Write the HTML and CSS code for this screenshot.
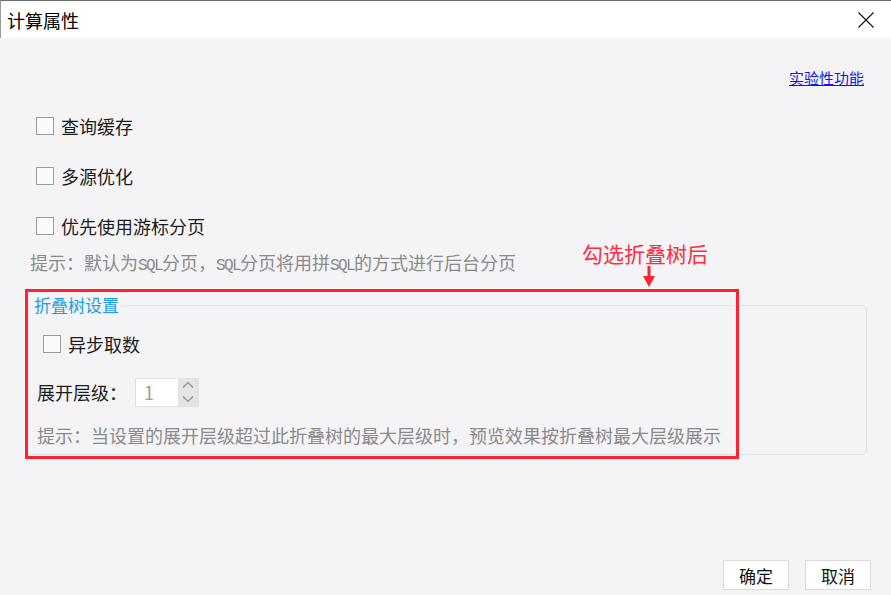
FILE: index.html
```html
<!doctype html>
<html lang="zh-CN">
    <head>
        <meta charset="UTF-8" />
        <meta name="viewport" content="width=device-width, initial-scale=1.0" />
        <title>计算属性</title>
        <link rel="stylesheet" href="styles.css">
    </head>
    <body>
        <div class="window">
            <div class="titlebar">
                <span class="title">计算属性</span>
                <svg class="close" width="16" height="16" viewBox="0 0 16 16">
                    <path d="M0.5 0.5 L15.5 15.5 M15.5 0.5 L0.5 15.5" stroke="#111" stroke-width="1.1" fill="none" />
                </svg>
            </div>
            <div class="content">
                <div class="topLink"><a href="#">实验性功能</a></div>
                <div class="options">
                    <label class="checkRow"><span class="box"></span>查询缓存</label>
                    <label class="checkRow"><span class="box"></span>多源优化</label>
                    <label class="checkRow"><span class="box"></span>优先使用游标分页</label>
                </div>
                <p class="hint">提示：默认为<span class="mono">SQL</span>分页，<span class="mono">SQL</span>分页将用拼<span class="mono">SQL</span>的方式进行后台分页</p>
                <div class="group">
                    <div class="groupTitle">折叠树设置</div>
                    <label class="checkRow inner"><span class="box"></span>异步取数</label>
                    <div class="levelRow">
                        <span>展开层级：</span>
                        <div class="spinner">
                            <span class="spinValue">1</span>
                            <div class="spinButtons">
                                <svg width="12" height="8" viewBox="0 0 12 8"><path d="M1 6.5 L6 1.5 L11 6.5" stroke="#8e8e8e" stroke-width="1.2" fill="none" /></svg>
                                <svg width="12" height="8" viewBox="0 0 12 8"><path d="M1 1.5 L6 6.5 L11 1.5" stroke="#8e8e8e" stroke-width="1.2" fill="none" /></svg>
                            </div>
                        </div>
                    </div>
                    <p class="hint inner">提示：当设置的展开层级超过此折叠树的最大层级时，预览效果按折叠树最大层级展示</p>
                </div>
            </div>
            <div class="footer">
                <button>确定</button>
                <button>取消</button>
            </div>

            <!-- annotation drawn over the dialog -->
            <div class="note">勾选折叠树后</div>
            <svg class="noteArrow" width="12" height="21" viewBox="0 0 12 21">
                <rect x="4.5" y="0" width="3" height="11" fill="#ff2433" />
                <path d="M0 10 L12 10 L6 21 Z" fill="#ff2433" />
            </svg>
            <div class="noteBox"></div>
        </div>
    </body>
</html>
```

FILE: styles.css
```css
body {
    margin: 0;
    font-family: "Noto Sans CJK SC", "Noto Sans", sans-serif;
    color: #1c1c1c;
    background: #f4f4f6;
}
.window {
    position: relative;
    display: flex;
    flex-direction: column;
    height: 595px;
    overflow: hidden;
}
.titlebar {
    display: flex;
    align-items: center;
    justify-content: space-between;
    box-sizing: border-box;
    height: 38px;
    padding: 0 17px 0 7px;
    background: #fff;
    border-top: 1px solid #6e6e6e;
    border-left: 1px solid #9a9a9a;
}
.title {
    font-size: 18px;
    line-height: 22px;
    color: #000;
    margin-left: -1px;
}
.close {
    margin-top: 1px;
}
.content {
    flex: 1;
}
.topLink {
    text-align: right;
    height: 20px;
    padding: 30px 27px 0 0;
    font-size: 15px;
    line-height: 20px;
}
.topLink a {
    color: #1515f0;
    text-decoration: underline;
}
.options {
    margin-top: 13px;
    padding-left: 36px;
}
.checkRow {
    display: flex;
    align-items: center;
    height: 50px;
    font-size: 18px;
}
.box {
    width: 16px;
    height: 16px;
    border: 1px solid #9c9c9c;
    background: #fafafa;
    margin-right: 7px;
}
.hint {
    margin: 0;
    padding-left: 30px;
    height: 22px;
    font-size: 18px;
    line-height: 22px;
    color: #8a8a8a;
}
.mono {
    font-family: "Liberation Mono", monospace;
    font-size: 16px;
    letter-spacing: -1.6px;
    line-height: 1;
}
.group {
    margin: 32px 24px 0 27px;
    padding: 0 0 8px 0;
    border: 1px solid #e3e3e7;
    border-radius: 6px;
}
.groupTitle {
    width: max-content;
    margin: -12px 0 0 3px;
    padding: 0 3px;
    background: #f4f4f6;
    color: #1a9ee2;
    font-size: 17px;
    line-height: 22px;
}
.checkRow.inner {
    height: 40px;
    margin-top: 8px;
    padding-left: 15px;
}
.levelRow {
    display: flex;
    align-items: center;
    height: 56px;
    padding-left: 9px;
    font-size: 18px;
}
.spinner {
    display: flex;
    height: 29px;
    margin-left: 8px;
    border: 1px solid #e0e0e0;
    box-sizing: border-box;
}
.spinValue {
    width: 34px;
    padding-left: 8px;
    background: #fff;
    color: #a59a98;
    line-height: 27px;
}
.spinButtons {
    display: flex;
    flex-direction: column;
    justify-content: center;
    gap: 6px;
    width: 20px;
    align-items: center;
    background: #e4e4e6;
}
.spinButtons svg {
    display: block;
}
.hint.inner {
    padding: 4px 0 0 9px;
}
.footer {
    display: flex;
    justify-content: flex-end;
    gap: 16px;
    padding: 0 20px 5px 0;
}
.footer button {
    width: 66px;
    height: 30px;
    font-family: "Noto Sans CJK SC", sans-serif;
    font-size: 17px;
    color: #111;
    background: #fff;
    border: 1px solid #dadada;
    padding: 0;
}
.note {
    position: absolute;
    left: 582px;
    top: 240px;
    font-size: 21px;
    line-height: 26px;
    color: #ff2d3d;
}
.noteArrow {
    position: absolute;
    left: 643px;
    top: 266px;
}
.noteBox {
    position: absolute;
    left: 25px;
    top: 289px;
    width: 708px;
    height: 164px;
    border: 3px solid #ff2332;
}
```
